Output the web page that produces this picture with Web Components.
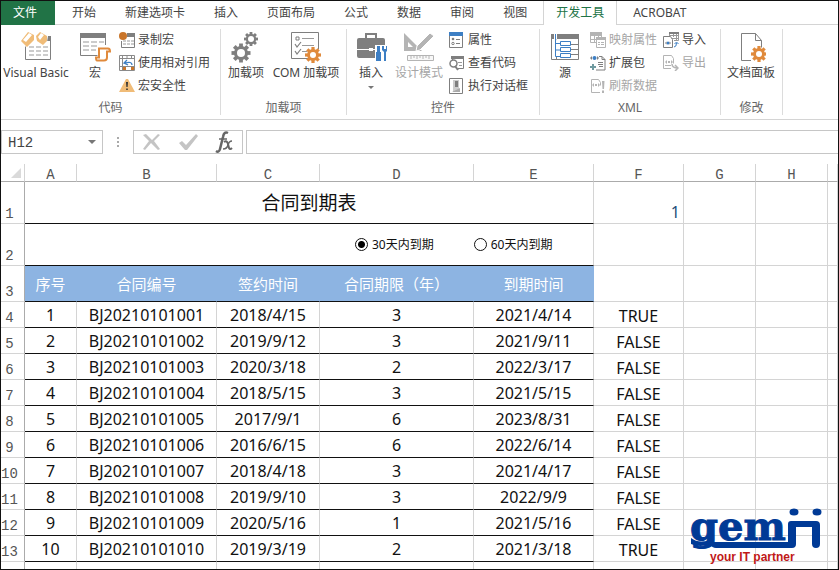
<!DOCTYPE html>
<html lang="zh-CN">
<head>
<meta charset="utf-8">
<title>合同到期表</title>
<style>
html, body { margin: 0; height: 100%; }
body { font: 12px/16px "Noto Sans", "Noto Sans CJK SC", sans-serif; color: #444; background: #fff; overflow: hidden; }
</style>
</head>
<body>
<excel-window></excel-window>
<script>
const G = '#7f7f7f', L = '#b4b4b4', O = '#e08a3c', B = '#3d7fc4';
const gear = (cx, cy, r, color, hole) => {
  let teeth = '';
  for (let i = 0; i < 8; i++) teeth += `<rect x="${cx - r * .2}" y="${cy - r}" width="${r * .4}" height="${r}" transform="rotate(${i * 45} ${cx} ${cy})"/>`;
  return `<g fill="${color}">${teeth}<circle cx="${cx}" cy="${cy}" r="${r * .74}"/></g><circle cx="${cx}" cy="${cy}" r="${hole}" fill="#fff"/>`;
};
const ICONS = {
  vb: [32, `<path d="M6 5h25v24H6z" fill="#fff"/><path d="M25 5h6v5h-6z" fill="${G}"/><path d="M5.500 15V28.500H30.500V10" fill="none" stroke="${G}"/><path d="M9 16h5m2 0h5m2 0h5M9 20h5m2 0h5m2 0h5M9 24h5m2 0h5m2 0h5" stroke="#999" fill="none"/><path d="M8 0l7 4-1 6-7 7-7-7zM20 0l8 5-1 6-4 4-8-6z" fill="#fff"/><path d="M8 1l6 3v5l-7 7-6-6zM20 1l7 4v5l-4 4-6-4-1-5z" fill="#f0bc78"/><path d="M9 2l3 2-6 7-3-2zM21 2l3 2-4 5-2-3z" fill="#fff"/>`],
  macro: [32, `<path d="M1.500 3v21.500h17M26.500 3v11" fill="none" stroke="${G}"/><path d="M1 2h26v5H1z" fill="${G}"/><path d="M4 11h6m2 0h6m2 0h5M4 15h6m2 0h6M4 19h6m2 0h5" stroke="#999" fill="none"/><path d="M20 17.500h9q2 0 2 3h-3v6q0 3-3 3h-7q-1 0-1-3h3z" fill="#fff" stroke="${O}" stroke-width="2"/>`],
  record: [16, `<path d="M2.500 9v6.500h13V3" fill="none" stroke="${G}"/><path d="M8 1h8v4H8z" fill="${G}"/><path d="M4 9h3m1 0h3m1 0h3M4 12h3m1 0h3m1 0h3" stroke="#999"/><circle cx="4" cy="4" r="4" fill="#c9752a"/>`],
  relative: [16, `<path d="M0.5 0.5h15v15h-15zM0.5 3.500h15M0.5 11.500h15M3.500 0.5v15M8 0.5v3M12.500 0.5v15" fill="#fff" stroke="#8a8a8a"/><path d="M4 4h11v7H4z" fill="#fff"/><path d="M4 12h3v3H4zM12 12h3v3h-3z" fill="#c9752a"/><path d="M13 10q0-4-7-2M8 5L5 8l4 2" fill="none" stroke="${B}" stroke-width="1.300"/>`],
  warn: [16, `<path d="M7 1h2l7 13H0z" fill="#f0bc78"/><path d="M7 4h2l-.4 5H7.400zM7.200 10.500h1.600V12H7.200z" fill="#333"/>`],
  addins: [32, gear(11, 22, 9.500, G, 4) + gear(21, 8, 7, G, 3)],
  com: [34, `<path d="M19 27.500H2.500v-26h27v17" fill="none" stroke="${G}"/><path d="M7 6h3v3H7z" fill="none" stroke="${G}"/><path d="M13 7.500h12M13 14.500h12M13 20.500h5" stroke="#999"/><path d="M6 13l2 3 4-5M6 20l2 3 4-5" fill="none" stroke="${G}" stroke-width="1.200"/>` + gear(24, 24, 8, O, 3)],
  insert: [32, `<path d="M11 8V3h10v5" fill="none" stroke="${G}" stroke-width="2"/><path d="M4 7h24q2 0 2 2v9H2V9q0-2 2-2zM2 19h28v6q0 2-2 2H4q-2 0-2-2z" fill="${G}"/><path d="M2 18.500h28" stroke="#fff"/><path d="M14 17h4v3h-4z" fill="#fff"/><path d="M20 14h12v17H20z" fill="#fff"/><path d="M22 15h3v6h1v9h-5v-9h1zM27 15v4l2 2v9h2v-9l2-2v-4h-2v3h-2v-3z" fill="${B}"/>`],
  design: [32, `<path d="M1 2l18 18H1zM5 11v5h5z" fill="${L}" fill-rule="evenodd"/><path d="M14 15L27 2l4 3-14 14-4 1z" fill="${L}" stroke="#fff"/><path d="M4.500 24.500h26v5h-26zM8 25v3m3-3v2m3-2v3m3-3v2m3-2v3m3-3v2m3-2v3" fill="#f8f8f8" stroke="${L}"/>`],
  props: [14, `<path d="M.5.500h13v15H.500z" fill="#fff" stroke="${G}"/><path d="M0 0h14v4H0z" fill="${B}"/><circle cx="4" cy="7" r="1.300" fill="${G}"/><circle cx="4" cy="11.500" r="1.200" fill="none" stroke="${G}"/><path d="M7 7.500h4M7 11.500h4" stroke="${G}"/>`],
  code: [16, `<path d="M3.500 3v2M14.500 3v10.500H9" fill="none" stroke="${G}"/><path d="M2 1h13v3H2z" fill="${G}"/><path d="M9 7.500h4M10 10.500h3" stroke="#999"/><circle cx="4.500" cy="8.500" r="3.500" fill="#fff" stroke="${G}" stroke-width="1.500"/><path d="M6 11l3 4" stroke="${G}" stroke-width="2"/>`],
  dialog: [14, `<path d="M.5.500h13v15H.500z" fill="#fff" stroke="${G}"/><path d="M4 2h6v12H4z" fill="#ccc"/><path d="M6 3h3v6H6z" fill="${G}"/><path d="M3 14l8-4v4z" fill="#aaa"/>`],
  source: [32, `<path d="M2.500 3.500h27v25h-27zM7.500 3v25M20 13.500h9M20 18.500h9M20 23.500h9" fill="none" stroke="${G}"/><path d="M2 3h28v5H2z" fill="${G}"/><path d="M6.500 3v22.500h5M6.500 12.500h5M6.500 19h5M11.500 10.500h10v4h-10zM11.500 16.500h10v4h-10zM11.500 22.500h10v4h-10z" fill="#fff" stroke="${B}"/><path d="M5 3h3v5H5z" fill="#fff"/><path d="M6.500 3v6" stroke="${B}"/>`],
  map: [16, `<path d="M.5 1.500h11v9H.500zM.500 7.500h11M4.500 2v8M8.500 2v8" fill="#fff" stroke="${L}"/><path d="M0 0h12v4H0z" fill="${L}"/><path d="M6.500 6.500h9v9h-9z" fill="#fff" stroke="${L}"/><path d="M6 5h10v3H6z" fill="${L}"/><path d="M8 10.500h2m1 0h3m-6 2h2m1 0h3" stroke="${L}"/>`],
  expand: [16, `<path d="M9 1.500h3l3 3v10.500H6M12 1.500v3h3M8 7.500h5M8 9.500h5M9 11.500h4" fill="none" stroke="${G}"/><path d="M0 3l2-2v4zM9 3L7 1v4z" fill="${G}"/><circle cx="4.500" cy="3" r="2" fill="${B}"/><path d="M0 11h2V9h2v2h2v2H4v2H2v-2H0z" fill="#6f9aa0"/>`],
  refresh: [16, `<path d="M10 14.500H1.500v-13h7l2 3v3" fill="none" stroke="${L}"/><path d="M4 5L2 7l2 2zM8 5l2 2-2 2zM5 6h2v2H5zM12 3h2.500l-.5 8h-1.500zM12 12.500h2V15h-2z" fill="${L}"/>`],
  import: [17, `<path d="M6.500 4V0.5h9v8H11M7 3.500h9M7 6.500h9M10.500 1v4M13.500 1v7" fill="none" stroke="#999"/><path d="M6 0h10v2H6z" fill="${G}"/><path d="M0.5 4.500h7l2 3v8h-9z" fill="#fff" stroke="${G}"/><circle cx="5" cy="11" r="1.500" fill="${B}"/><path d="M2 11l1.500-1.500v3zM8 11L6.500 9.500v3z" fill="${G}"/><path d="M11 15q2.500 0 2.500-4M11.500 12l2-2 2 2" fill="none" stroke="${B}"/>`],
  export: [17, `<path d="M8 13.500H.500V.500h8l2 3v5" fill="none" stroke="${L}"/><path d="M4 5L2 7l2 2zM8 5l2 2-2 2zM5 6h2v2H5z" fill="${L}"/><path d="M2 10.500h6" stroke="${L}"/><path d="M9 9q0 4 6 4M12 10l3 3-3 3" fill="none" stroke="${L}" stroke-width="1.500"/>`],
  docpanel: [30, `<path d="M15 29.500H5.500v-27h14l6 7v7M19.500 2.500v7h6" fill="#fff" stroke="${G}"/>` + gear(23, 23, 8, O, 3)]
};

const define = (name, html, setup) => {
  const template = document.createElement('template');
  template.innerHTML = html;
  customElements.define(name, class extends HTMLElement {
    connectedCallback() {
      if (this.shadowRoot) return;
      const root = this.attachShadow({ mode: 'open' });
      root.append(template.content.cloneNode(true));
      if (setup) setup(root, this);
    }
  });
};

define('ribbon-tabs', `<style>
:host { display: flex; gap: 1px; height: 24px; border-bottom: 1px solid #d4d4d4; box-sizing: border-box; }
button { font: inherit; color: inherit; background: none; border: 0; margin: 0; padding: 0 14px; height: 23px; white-space: nowrap; }
.file { background: #217346; color: #fff; padding: 0 18px 0 12px; margin-right: 2px; height: 24px; }
.on { height: 24px; color: #217346; background: #fff; padding: 0 12px; border: solid #d4d4d4; border-width: 0 1px; margin: 0 1px; }
</style>`, root => {
  '文件 开始 新建选项卡 插入 页面布局 公式 数据 审阅 视图 开发工具 ACROBAT'.split(' ').forEach(name => {
    const b = document.createElement('button');
    b.textContent = name;
    if (name === '文件') b.className = 'file';
    if (name === '开发工具') b.className = 'on';
    root.append(b);
  });
});

define('ribbon-group', `<style>
:host { display: flex; flex-direction: column; justify-content: space-between; border-right: 1px solid #dcdcdc; box-sizing: border-box; height: 86px; }
.items { display: flex; align-items: flex-start; }
.name { text-align: center; color: #666; line-height: 14px; }
</style><div class="items"><slot></slot></div><div class="name"></div>`, (root, host) => {
  root.querySelector('.name').textContent = host.getAttribute('label');
});

define('ribbon-column', `<style>
:host { display: grid; grid-auto-rows: 23px; padding-top: 1px; }
</style><slot></slot>`);

define('ribbon-button', `<style>
:host { display: block; }
button { font: inherit; color: inherit; background: none; border: 0; padding: 0; margin: 0; white-space: nowrap; display: flex; width: 100%; align-items: center; }
:host([large]) button { flex-direction: column; gap: 2px; padding-top: 2px; }
:host([large]) svg { height: 32px; }
:host([large]) span { align-self: center; display: flex; justify-content: center; width: 0; }
:host(:not([large])) button { gap: 3px; height: 20px; }
:host(:not([large])) svg { height: 16px; width: 16px; }
:host([disabled]) button { color: #a6a6a6; }
i { border: 3px solid transparent; border-top-color: #777; border-bottom: 0; margin-top: 3px; }
:host(:not([menu])) i { display: none; }
</style><button><svg aria-hidden="true"></svg><span><slot></slot></span><i></i></button>`, (root, host) => {
  const svg = root.querySelector('svg'), [w, art] = ICONS[host.getAttribute('icon')];
  const large = host.hasAttribute('large');
  svg.setAttribute('viewBox', `0 0 ${large ? w : 16} ${large ? 32 : 16}`);
  if (large) svg.setAttribute('width', w);
  svg.innerHTML = art;
  root.querySelector('button').disabled = host.hasAttribute('disabled');
});

define('ribbon-bar', `<style>
:host { display: flex; height: 95px; padding-top: 4px; box-sizing: border-box; border-bottom: 1px solid #d4d4d4; }
.w48 { width: 48px; } .w50 { width: 50px; } .w60 { width: 60px; } .w70 { width: 70px; }
.code { width: 220px; } .add { width: 126px; } .ctl { width: 193px; } .xml { width: 181px; } .mod { width: 62px; }
.indent { margin-left: 6px; }
</style>
<ribbon-group class="code" label="代码">
  <ribbon-button large class="w70" icon="vb">Visual Basic</ribbon-button>
  <ribbon-button large class="w48" icon="macro">宏</ribbon-button>
  <ribbon-column><ribbon-button icon="record">录制宏</ribbon-button><ribbon-button icon="relative">使用相对引用</ribbon-button><ribbon-button icon="warn">宏安全性</ribbon-button></ribbon-column>
</ribbon-group>
<ribbon-group class="add" label="加载项">
  <ribbon-button large class="w50" icon="addins">加载项</ribbon-button>
  <ribbon-button large class="w70" icon="com">COM 加载项</ribbon-button>
</ribbon-group>
<ribbon-group class="ctl" label="控件">
  <ribbon-button large menu class="w48" icon="insert">插入</ribbon-button>
  <ribbon-button large disabled class="w48" icon="design">设计模式</ribbon-button>
  <ribbon-column class="indent"><ribbon-button icon="props">属性</ribbon-button><ribbon-button icon="code">查看代码</ribbon-button><ribbon-button icon="dialog">执行对话框</ribbon-button></ribbon-column>
</ribbon-group>
<ribbon-group class="xml" label="XML">
  <ribbon-button large class="w50" icon="source">源</ribbon-button>
  <ribbon-column><ribbon-button disabled icon="map">映射属性</ribbon-button><ribbon-button icon="expand">扩展包</ribbon-button><ribbon-button disabled icon="refresh">刷新数据</ribbon-button></ribbon-column>
  <ribbon-column class="indent"><ribbon-button icon="import">导入</ribbon-button><ribbon-button disabled icon="export">导出</ribbon-button></ribbon-column>
</ribbon-group>
<ribbon-group class="mod" label="修改">
  <ribbon-button large class="w60" icon="docpanel">文档面板</ribbon-button>
</ribbon-group>`);

define('formula-bar', `<style>
:host { display: flex; padding: 10px 0; height: 44px; box-sizing: border-box; }
.name, .tools { display: flex; align-items: center; border: 1px solid #c6c6c6; box-sizing: border-box; height: 24px; }
.name { width: 102px; }
input { font: 14px/18px "Liberation Mono", monospace; color: #444; border: 0; outline: 0; background: none; min-width: 0; padding: 0; }
.name input { flex: 1; padding: 2px 0 0 6px; height: 20px; box-sizing: border-box; }
button { border: 0; background: none; padding: 0; display: flex; }
.name button { width: 20px; height: 20px; align-items: center; justify-content: center; }
.dots { width: 30px; display: flex; align-items: center; justify-content: center; }
.tools { width: 110px; justify-content: space-around; }
.formula { flex: 1; border: 1px solid #c6c6c6; border-right: 0; margin-left: 3px; height: 24px; box-sizing: border-box; }
</style>
<div class="name"><input aria-label="名称框" value="H12"><button aria-label="名称列表"><svg width="8" height="5"><path d="M0 0h8L4 4z" fill="#777"/></svg></button></div>
<div class="dots"><svg width="2" height="10"><path d="M0 0h2v2H0zM0 4h2v2H0zM0 8h2v2H0z" fill="#aaa"/></svg></div>
<div class="tools">
<button aria-label="取消"><svg width="20" height="18"><path d="M1 2l3-1 6 6 6-6 2 1-6 6 6 8-2 1-7-7-6 7-2-1 6-8z" fill="#c4c4c4"/></svg></button>
<button aria-label="输入"><svg width="20" height="18"><path d="M1 10l3-2 4 4L18 1l2 2L9 17H7z" fill="#c4c4c4"/></svg></button>
<button aria-label="插入函数"><svg width="20" height="22" fill="none" stroke="#666"><path d="M14 2q-4-2-5 4L6 18q-1 4-4 2" stroke-width="2.500"/><path d="M5 8h8" stroke-width="1.500"/><path d="M10 11q3-2 4 2l1 4q1 2 3 0" stroke-width="2"/><path d="M18 10q-3 0-4 4t-5 4" stroke-width="1.500"/></svg></button>
</div>
<input class="formula" aria-label="编辑栏">`);

define('expiry-choice', `<style>
:host { display: flex; gap: 40px; padding-left: 330px; font-size: 12px; line-height: 16px; color: #111; }
label { display: flex; align-items: center; gap: 4px; white-space: nowrap; }
input { appearance: none; margin: 0; width: 13px; height: 13px; border: 1px solid #111; border-radius: 50%; background: #fff; }
input:checked { background: radial-gradient(circle, #000 0 3px, #fff 4px); }
</style>
<label><input type="radio" name="due" checked>30天内到期</label>
<label><input type="radio" name="due">60天内到期</label>`);

define('sheet-grid', `<style>
:host { display: block; overflow: hidden; }
table { width: 100%; table-layout: fixed; border-collapse: separate; border-spacing: 0; font-size: 16px; line-height: 20px; color: #111; text-align: center; }
td, th { box-sizing: border-box; padding: 0; border: solid #d4d4d4; border-width: 0 1px 1px 0; font-weight: normal; overflow: hidden; white-space: nowrap; height: 26px; }
th { font: 14px/14px "Liberation Mono", monospace; color: #555; }
thead th { height: 18px; border-bottom-color: #ababab; vertical-align: bottom; line-height: 12px; }
tbody th { border-right-color: #ababab; vertical-align: bottom; padding: 0 6px 2px 0; }
.tall td, .tall th { height: 42px; }
.head td, .head th { height: 36px; }
.in { border-bottom-color: #111; }
.head .in { background: #8db4e2; color: #fff; font-size: 15px; border-right-color: #8db4e2; }
.title { font-size: 19px; }
.f { vertical-align: bottom; padding-bottom: 1px; }
.right { text-align: right; padding-right: 3px; color: #1f4e79; }
.corner svg { display: block; margin-left: auto; }
.corner { padding-right: 3px; padding-bottom: 3px; }
</style>
<table><colgroup></colgroup>
<thead><tr><th class="corner"><svg width="10" height="10"><path d="M10 0v10H0z" fill="#dadada"/></svg></th></tr></thead>
<tbody>
<tr class="tall"><th>1</th><td class="in title" colspan="5">合同到期表</td><td class="f right">1</td><td></td><td></td><td></td></tr>
<tr class="tall"><th>2</th><td class="in" colspan="5"><expiry-choice></expiry-choice></td><td></td><td></td><td></td><td></td></tr>
<tr class="head"><th>3</th><td class="in">序号</td><td class="in">合同编号</td><td class="in">签约时间</td><td class="in">合同期限（年）</td><td class="in">到期时间</td><td></td><td></td><td></td><td></td></tr>
</tbody></table>`, root => {
  root.querySelector('colgroup').innerHTML = [24, 52, 140, 103, 154, 120, 90, 72, 72].map(w => `<col style="width:${w}px">`).join('') + '<col>';
  [...'ABCDEFGH', ''].forEach(c => {
    const th = document.createElement('th');
    th.textContent = c;
    root.querySelector('thead tr').append(th);
  });
  const rows = [
    ['2018/4/15', 3, '2021/4/14', 'TRUE'], ['2019/9/12', 3, '2021/9/11', 'FALSE'],
    ['2020/3/18', 2, '2022/3/17', 'FALSE'], ['2018/5/15', 3, '2021/5/15', 'FALSE'],
    ['2017/9/1', 6, '2023/8/31', 'FALSE'], ['2016/6/15', 6, '2022/6/14', 'FALSE'],
    ['2018/4/18', 3, '2021/4/17', 'FALSE'], ['2019/9/10', 3, '2022/9/9', 'FALSE'],
    ['2020/5/16', 1, '2021/5/16', 'FALSE'], ['2019/3/19', 2, '2021/3/18', 'TRUE']];
  root.querySelector('tbody').insertAdjacentHTML('beforeend', rows.map(([signed, years, due, flag], i) => {
    const n = i + 1;
    return `<tr><th>${n + 3}</th>${[n, 'BJ20210101' + String(n).padStart(3, '0'), signed, years, due].map(v => `<td class="in">${v}</td>`).join('')}<td class="f">${flag}</td><td></td><td></td><td></td></tr>`;
  }).join('') + '<tr><th></th>' + '<td></td>'.repeat(9) + '</tr>');
});

define('gemji-logo', `<style>
:host { display: block; }
svg { display: block; overflow: visible; }
</style>
<svg width="136" height="64" viewBox="0 -4 136 64" role="img">
<text x="2" y="36" font-family="DejaVu Serif" font-weight="bold" font-size="40" fill="#003a96" stroke="#003a96">gem</text>
<path d="M3 34q8 6 18 2l6 2H100V20q0-3 3-3h25q4 0 4 4v19q0 4-4 4t-4-4V23h-16v17q0 4-4 4H28q-4 0-6-4-10 4-19 0z" fill="#003a96"/>
<ellipse cx="106" cy="8" rx="4.500" ry="3.500" fill="#003a96"/><ellipse cx="129" cy="8" rx="4.500" ry="3.500" fill="#003a96"/>
<text x="22" y="57" font-family="Liberation Sans" font-weight="bold" font-size="12" fill="#c01818">your IT partner</text>
</svg>`);

define('excel-window', `<style>
:host { display: flex; flex-direction: column; height: 100vh; box-sizing: border-box; border: 1px solid #111; background: #fff; position: relative; overflow: hidden; }
sheet-grid { flex: 1; min-height: 0; }
gemji-logo { position: absolute; right: 14px; bottom: 5px; }
</style>
<ribbon-tabs></ribbon-tabs><ribbon-bar></ribbon-bar><formula-bar></formula-bar><sheet-grid></sheet-grid><gemji-logo></gemji-logo>`);
</script>
</body>
</html>
